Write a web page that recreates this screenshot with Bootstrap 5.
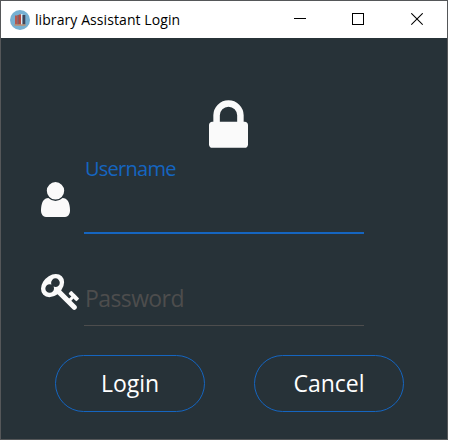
<!DOCTYPE html>
<html lang="en">
<head>
<meta charset="utf-8">
<title>library Assistant Login</title>
<link rel="stylesheet" href="https://cdn.jsdelivr.net/npm/bootstrap@5.3.0/dist/css/bootstrap.min.css">
<style>
body{font-family:"Open Sans","Noto Sans",sans-serif;background:#fff;overflow:hidden}
.window{width:448px;height:440px;border:1px solid #555759;background:#273238}
.titlebar{height:37px;padding-left:9px;color:#000}
.title-text{font-size:14px;line-height:37px;letter-spacing:.08px;margin-left:5px}
.win-btns{margin-right:1px}
.win-btn{width:58.5px;height:37px}
.content{padding:62px 43px 0 40px}
.lock{width:39px;height:48px;margin-left:168px}
.user-row{height:86px}
.user-icon{width:29px;height:35px;margin-top:34px}
.key-icon{width:38px;height:36px;margin-top:1px}
.icon-col{width:43px}
.field{width:280px}
.field-user{border-bottom:2px solid #1565c0;color:#1565c0;font-size:20px;line-height:28px;letter-spacing:-.75px;padding:7px 0 0 1px}
.key-row{height:53px;margin-top:39px}
.field-pass{border-bottom:1px solid #4d4d4d;color:#4d4d4d;font-size:23px;line-height:32px;letter-spacing:-.6px;padding:9px 0 0 1px}
.actions{gap:49px;margin:29px 0 0 14px}
.btn-round{width:150px;height:57px;color:#fff;border:1px solid #1565c0;font-size:23px;line-height:32px;padding:0 0 2px}
</style>
<script src="https://cdn.jsdelivr.net/npm/bootstrap@5.3.0/dist/js/bootstrap.bundle.min.js"></script>
</head>
<body>
<main class="window">
  <header class="titlebar bg-white d-flex align-items-center">
    <svg width="20" height="20" viewBox="0 0 20 20">
      <circle cx="10" cy="10" r="10" fill="#76b0d2"/>
      <path d="M4.500 14.200h11v1.500h-11z" fill="#c58f68"/>
      <path d="M5 5.500h2.500v8.700H5z" fill="#b5584e"/><path d="M7.500 5h1.300v9.200H7.500z" fill="#8a4a4a"/>
      <path d="M8.800 4.500h2.200v9.700H8.800z" fill="#b5483e"/><path d="M11 4h1.500v10.200H11z" fill="#dfe6ea"/>
      <path d="M12.500 5h2.800v9.200h-2.800z" fill="#40475b"/>
    </svg>
    <span class="title-text text-nowrap">library Assistant Login</span>
    <div class="win-btns d-flex ms-auto">
      <div class="win-btn d-flex align-items-center justify-content-center"><svg width="12" height="13" shape-rendering="crispEdges"><path d="M0 5h12v1H0z"/></svg></div>
      <div class="win-btn d-flex align-items-center justify-content-center"><svg width="12" height="13" shape-rendering="crispEdges"><path d="M.5 .5h11v11H.5z" fill="none" stroke="#000"/></svg></div>
      <div class="win-btn d-flex align-items-center justify-content-center"><svg width="12" height="13"><path d="M.3 .3l11.400 11.400M11.700 .3L.3 11.700" fill="none" stroke="#000" stroke-width="1.100"/></svg></div>
    </div>
  </header>
  <form class="content">
    <svg class="lock d-block" viewBox="320 128 1152 1408" fill="#fafafa"><path d="M640 768h512v-192q0-106-75-181t-181-75-181 75-75 181v192zm832 96v576q0 40-28 68t-68 28h-960q-40 0-68-28t-28-68v-576q0-40 28-68t68-28h32v-192q0-184 132-316t316-132 316 132 132 316v192h32q40 0 68 28t28 68z"/></svg>
    <div class="user-row d-flex">
      <div class="icon-col"><svg class="user-icon d-block" viewBox="256 128 1280 1536" fill="#fafafa"><path d="M1536 1399q0 109-62.500 187t-150.500 78h-854q-88 0-150.500-78t-62.500-187q0-85 8.500-160.500t31.500-152 58.500-131 94-89 134.500-34.500q131 128 313 128t313-128q76 0 134.500 34.500t94 89 58.500 131 31.500 152 8.500 160.500zm-256-887q0 159-112.500 271.500t-271.500 112.500-271.500-112.500-112.500-271.500 112.500-271.500 271.500-112.500 271.500 112.500 112.500 271.500z"/></svg></div>
      <div class="field field-user"><span class="username-label">Username</span></div>
    </div>
    <div class="key-row d-flex">
      <div class="icon-col"><svg class="key-icon d-block" viewBox="0 128 1683 1592" fill="#fafafa"><path d="M832 512q0-80-56-136t-136-56-136 56-56 136q0 42 19 83-41-19-83-19-80 0-136 56t-56 136 56 136 136 56 136-56 56-136q0-42-19-83 41 19 83 19 80 0 136-56t56-136zm851 704q0 17-49 66t-66 49q-9 0-28.500-16t-36.500-33-38.500-40-24.500-26l-96 96 220 220q28 28 28 68 0 42-39 81t-81 39q-40 0-68-28l-671-671q-176 131-365 131-163 0-265.500-102.500t-102.500-265.500q0-160 95-313t248-248 313-95q163 0 265.500 102.500t102.500 265.500q0 189-131 365l355 355 96-96q-3-3-26-24.500t-40-38.500-33-36.500-16-28.500q0-17 49-66t66-49q13 0 23 10 6 6 46 44.500t82 79.500 86.500 86 73 78 28.500 41z"/></svg></div>
      <div class="field field-pass"><span>Password</span></div>
    </div>
    <div class="actions d-flex">
      <button type="button" class="btn btn-round rounded-pill">Login</button>
      <button type="button" class="btn btn-round rounded-pill">Cancel</button>
    </div>
  </form>
</main>
</body>
</html>
